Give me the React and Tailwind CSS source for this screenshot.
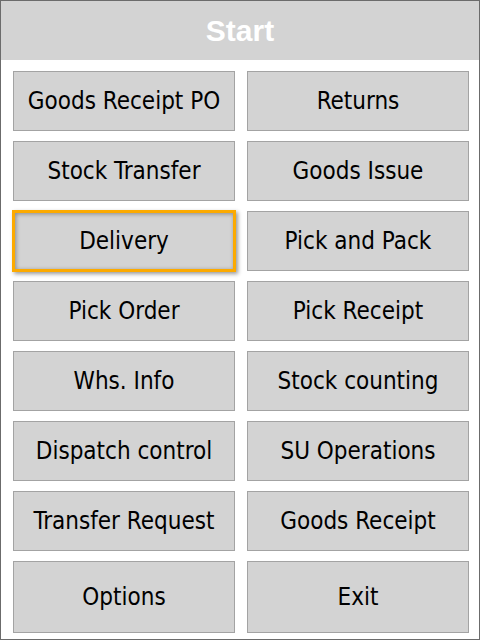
import React from 'react';

const buttons = [
  'Goods Receipt PO', 'Returns',
  'Stock Transfer', 'Goods Issue',
  'Delivery', 'Pick and Pack',
  'Pick Order', 'Pick Receipt',
  'Whs. Info', 'Stock counting',
  'Dispatch control', 'SU Operations',
  'Transfer Request', 'Goods Receipt',
  'Options', 'Exit',
];

const App = () => {
  const focused = 'Delivery';

  return (
    <div className="w-[480px] h-[640px] border border-[#6b6b6b] bg-white flex flex-col overflow-hidden">
      {/* Header */}
      <div className="h-[59px] bg-[#d3d3d3] flex items-center justify-center shrink-0">
        <h1 className="text-white font-bold text-[30px] leading-none font-['Liberation_Sans',Arial,sans-serif]">
          Start
        </h1>
      </div>

      {/* Menu grid */}
      <div className="flex-1 pt-[11px] pl-[12px] pr-[10px] pb-[6px] grid grid-cols-2 gap-x-[12px] gap-y-[10px] grid-rows-[repeat(7,60px)_1fr]">
        {buttons.map((label) => (
          <button
            key={label}
            className={
              label === focused
                ? "-m-px bg-[#d3d3d3] border-[3px] border-[#fcaa00] shadow-[2px_2px_4px_rgba(0,0,0,0.4),inset_1px_1px_4px_rgba(0,0,0,0.35)] text-black text-[24px] font-['DejaVu_Sans_Condensed','DejaVu_Sans',sans-serif] [font-stretch:condensed] flex items-center justify-center"
                : "bg-[#d3d3d3] border border-[#a3a3a3] text-black text-[24px] font-['DejaVu_Sans_Condensed','DejaVu_Sans',sans-serif] [font-stretch:condensed] flex items-center justify-center"
            }
          >
            {label}
          </button>
        ))}
      </div>
    </div>
  );
};

export default App;
